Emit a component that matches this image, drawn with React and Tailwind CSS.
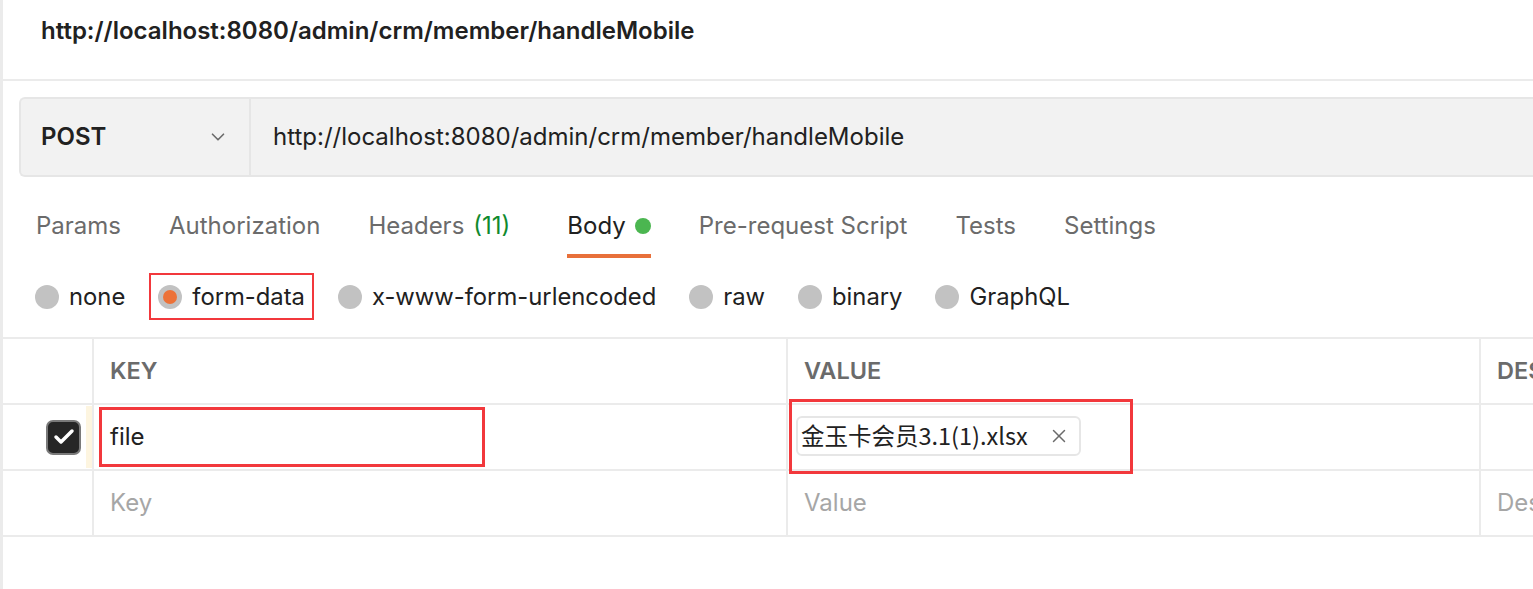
import { ChevronDown, X, Check } from "lucide-react";

const tabs = [
  { label: "Params" },
  { label: "Authorization" },
  { label: "Headers", count: "(11)" },
  { label: "Body", active: true },
  { label: "Pre-request Script" },
  { label: "Tests" },
  { label: "Settings" },
];

const bodyTypes = ["none", "form-data", "x-www-form-urlencoded", "raw", "binary", "GraphQL"];

const Radio = ({ checked }) => (
  <span className="w-[24px] h-[24px] rounded-full bg-[#c2c2c2] flex items-center justify-center shrink-0">
    {checked && <span className="w-[14px] h-[14px] rounded-full bg-[#ed7238]" />}
  </span>
);

const App = () => {
  return (
    <div
      className="w-[1533px] h-[589px] overflow-hidden bg-white border-l-[3px] border-[#ebebeb] text-[#212121]"
      style={{ fontFamily: "Inter, 'Noto Sans', 'Noto Sans CJK SC', sans-serif" }}
    >
      {/* request name */}
      <div className="h-[81px] border-b-2 border-[#ebebeb] flex items-center pl-[38px] pb-[18px]">
        <span className="text-[24px] font-semibold">
          http://localhost:8080/admin/crm/member/handleMobile
        </span>
      </div>

      {/* url bar */}
      <div className="pl-[16px] pt-[16px]">
        <div className="h-[80px] flex bg-[#f2f2f2] border-2 border-r-0 border-[#e6e6e6] rounded-l-[6px]">
          <div className="w-[230px] shrink-0 flex items-center justify-between pl-[20px] pr-[20px] border-r-2 border-[#e6e6e6]">
            <span className="text-[24px] font-semibold">POST</span>
            <ChevronDown size={22} strokeWidth={1.8} className="text-[#6b6b6b]" />
          </div>
          <div className="flex items-center pl-[22px] text-[24px]">
            http://localhost:8080/admin/crm/member/handleMobile
          </div>
        </div>
      </div>

      {/* tabs */}
      <div className="flex gap-[48px] pl-[33px] h-[81px] items-end">
        {tabs.map((t) => (
          <div
            key={t.label}
            className={
              "h-[50px] flex items-start gap-[9px] text-[24px] border-b-4 " +
              (t.count ? "mr-[9px] " : "") +
              (t.active ? "border-[#e8703a] text-[#212121]" : "border-transparent text-[#6b6b6b]")
            }
          >
            <span>{t.label}</span>
            {t.count && <span className="text-[#0f8a2e]">{t.count}</span>}
            {t.active && <span className="w-[16px] h-[16px] rounded-full bg-[#4bb650] mt-[10px]" />}
          </div>
        ))}
      </div>

      {/* body types */}
      <div className="h-[79px] flex items-center gap-[33px] pl-[32px] pb-[2px]">
        {bodyTypes.map((b) => {
          const sel = b === "form-data";
          return (
            <div
              key={b}
              className={
                "flex items-center gap-[10px] text-[23.8px] " +
                (sel ? "-mx-[9px] px-[7px] h-[47px] border-2 border-[#f2383c]" : "")
              }
            >
              <Radio checked={sel} />
              <span>{b}</span>
            </div>
          );
        })}
      </div>

      {/* params table */}
      <div className="border-t-2 border-[#ebebeb]">
        <div className="flex h-[66px] border-b-2 border-[#ebebeb] text-[23.5px] font-semibold text-[#6b6b6b]">
          <div className="w-[91px] shrink-0 border-r-2 border-[#ebebeb]" />
          <div className="w-[694px] shrink-0 border-r-2 border-[#ebebeb] flex items-center pl-[16px]">KEY</div>
          <div className="w-[693px] shrink-0 border-r-2 border-[#ebebeb] flex items-center pl-[16px]">VALUE</div>
          <div className="flex-1 min-w-0 flex items-center pl-[16px] whitespace-nowrap overflow-hidden">DESCRIPTION</div>
        </div>

        <div className="flex h-[66px] border-b-2 border-[#ebebeb] text-[24px]">
          <div className="w-[91px] shrink-0 border-r-2 border-[#ebebeb] flex items-center justify-between pl-[43px]">
            <span className="w-[35px] h-[35px] rounded-[7px] bg-[#262626] border-2 border-[#7a7a7a] flex items-center justify-center">
              <Check size={24} strokeWidth={3.5} className="text-white" />
            </span>
            <span className="w-[6px] h-[62px] bg-[#fdf5e0]" />
          </div>
          <div className="relative w-[694px] shrink-0 border-r-2 border-[#ebebeb] flex items-center pl-[16px]">
            file
            <div className="absolute left-[5px] top-[2px] w-[386px] h-[60px] border-[3px] border-[#f2383c]" />
          </div>
          <div className="relative w-[693px] shrink-0 border-r-2 border-[#ebebeb] flex items-center pl-[8px]">
            <div className="h-[40px] w-[285px] mt-[-2px] flex items-center border-2 border-[#e6e6e6] rounded-[6px] pl-[3px]">
              <span style={{ fontFamily: "'Noto Sans CJK SC', sans-serif" }} className="text-[23.5px]">
                金玉卡会员3.1(1).xlsx
              </span>
              <X size={22} strokeWidth={1.6} className="text-[#6b6b6b] ml-auto mr-[9px]" />
            </div>
            <div className="absolute left-[1px] top-[-6px] w-[344px] h-[75px] border-[3px] border-[#f2383c]" />
          </div>
          <div className="flex-1" />
        </div>

        <div className="flex h-[66px] border-b-2 border-[#ebebeb] text-[24px] text-[#a6a6a6]">
          <div className="w-[91px] shrink-0 border-r-2 border-[#ebebeb]" />
          <div className="w-[694px] shrink-0 border-r-2 border-[#ebebeb] flex items-center pl-[16px]">Key</div>
          <div className="w-[693px] shrink-0 border-r-2 border-[#ebebeb] flex items-center pl-[16px]">Value</div>
          <div className="flex-1 min-w-0 flex items-center pl-[16px] whitespace-nowrap overflow-hidden">Description</div>
        </div>
      </div>
    </div>
  );
};

export default App;
